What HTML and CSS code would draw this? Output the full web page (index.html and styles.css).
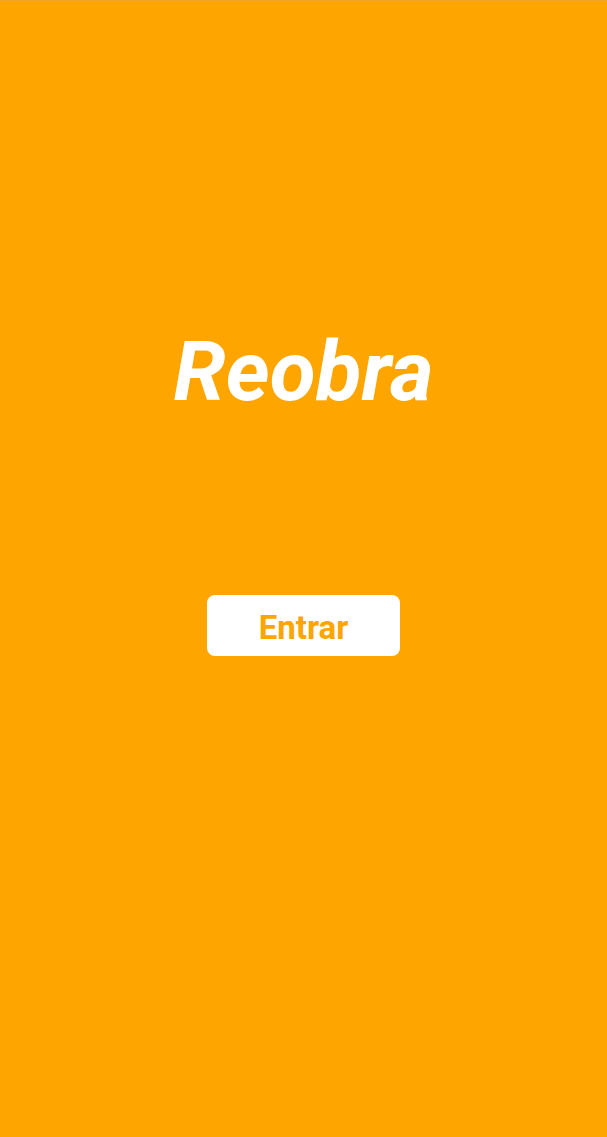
FILE: index.html
```html
<!DOCTYPE html>
<html lang="pt">
<head>
<meta charset="utf-8">
<title>Reobra</title>
<link rel="stylesheet" href="styles.css">
</head>
<body>
<main class="screen">
  <h1 class="title">Reobra</h1>
  <button class="enter">Entrar</button>
</main>
</body>
</html>
```
FILE: styles.css
```css
html, body {
  margin: 0;
  padding: 0;
  height: 100%;
}
body {
  background: #ffa500;
  font-family: Roboto, "Liberation Sans", sans-serif;
}
.screen {
  height: 1137px;
  box-sizing: border-box;
  border-top: 1px solid #eaa52a;
  display: flex;
  flex-direction: column;
  align-items: center;
  padding-top: 321px;
}
.title {
  margin: 0;
  color: #ffffff;
  font-size: 84px;
  font-weight: 700;
  font-style: italic;
  line-height: 100px;
  letter-spacing: 0;
}
.enter {
  margin-top: 173px;
  width: 193px;
  height: 61px;
  border: none;
  border-radius: 8px;
  background: #ffffff;
  color: #ffa500;
  font-family: Roboto, "Liberation Sans", sans-serif;
  font-size: 33px;
  font-weight: 700;
  padding: 3px 0 0;
  cursor: pointer;
}
```
